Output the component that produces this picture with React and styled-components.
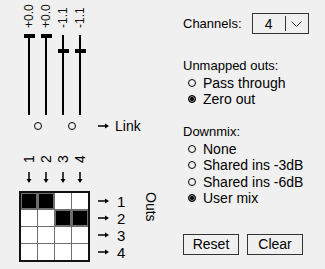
import React from "react";
import styled, { createGlobalStyle } from "styled-components";

const GlobalStyle = createGlobalStyle`
  body {
    margin: 0;
    background: #f0f0f0;
    font-family: "Liberation Sans", Arial, sans-serif;
    font-size: 13px;
    color: #000;
  }
`;

const gains = [0, 0, -1.1, -1.1];
const mix = [
  [1, 1, 0, 0],
  [0, 0, 1, 1],
  [0, 0, 0, 0],
  [0, 0, 0, 0],
];
const TRACK = 80;
const RANGE = 6;

function fmt(db) {
  const s = Math.abs(db).toFixed(1);
  return db < 0 ? "-" + s : "+" + s;
}

function RightArrow() {
  return (
    <svg width="11" height="6" viewBox="0 0 11 6">
      <path d="M0 3H8" stroke="#000" strokeWidth="1.5" />
      <path d="M7 0.5L11 3L7 5.5Z" fill="#000" />
    </svg>
  );
}

function DownArrow() {
  return (
    <svg width="6" height="11" viewBox="0 0 6 11">
      <path d="M3 0V8" stroke="#000" strokeWidth="1.5" />
      <path d="M0.5 7L3 11L5.5 7Z" fill="#000" />
    </svg>
  );
}

function Chevron() {
  return (
    <svg width="11" height="6" viewBox="0 0 11 6">
      <path d="M0.5 0.5L5.5 5.5L10.5 0.5" fill="none" stroke="#333" strokeWidth="1" />
    </svg>
  );
}

export default function App() {
  return (
    <Page>
      <GlobalStyle />
      <LeftPanel>
        <SliderRow>
          {gains.map((g, i) => (
            <SliderCol key={i}>
              <Gain>{fmt(g)}</Gain>
              <Track>
                <Handle style={{ top: (-g / RANGE) * TRACK - 1 }} />
              </Track>
            </SliderCol>
          ))}
        </SliderRow>
        <LinkRow>
          <LinkCell>
            <Circle />
          </LinkCell>
          <LinkCell>
            <Circle />
          </LinkCell>
          <LinkArrow>
            <RightArrow />
          </LinkArrow>
          <LinkLabel>Link</LinkLabel>
        </LinkRow>
        <Header>
          {[1, 2, 3, 4].map((n) => (
            <HeaderCell key={n}>
              <ColNum>{n}</ColNum>
              <DownWrap>
                <DownArrow />
              </DownWrap>
            </HeaderCell>
          ))}
        </Header>
        <MatrixRow>
          <Matrix>
            {mix.map((row, r) =>
              row.map((on, c) => <Cell key={r + "-" + c} $on={!!on} />)
            )}
          </Matrix>
          <OutList>
            {[1, 2, 3, 4].map((n) => (
              <OutItem key={n}>
                <RightArrow />
                <span>{n}</span>
              </OutItem>
            ))}
          </OutList>
          <OutsLabel>Outs</OutsLabel>
        </MatrixRow>
      </LeftPanel>

      <RightPanel>
        <ChannelsRow>
          <span>Channels:</span>
          <Select>
            <SelectValue>4</SelectValue>
            <SelectDivider />
            <SelectButton>
              <Chevron />
            </SelectButton>
          </Select>
        </ChannelsRow>

        <Group $mt="24px">
          <Heading>Unmapped outs:</Heading>
          <Option>
            <Circle />
            Pass through
          </Option>
          <Option>
            <Circle $checked />
            Zero out
          </Option>
        </Group>

        <Group $mt="16.5px">
          <Heading>Downmix:</Heading>
          <Option>
            <Circle />
            None
          </Option>
          <Option>
            <Circle />
            Shared ins -3dB
          </Option>
          <Option>
            <Circle />
            Shared ins -6dB
          </Option>
          <Option>
            <Circle $checked />
            User mix
          </Option>
        </Group>

        <Buttons>
          <Button>Reset</Button>
          <Button>Clear</Button>
        </Buttons>
      </RightPanel>
    </Page>
  );
}

const Page = styled.div`
  display: flex;
  width: 325px;
  height: 269px;
  overflow: hidden;
`;

const LeftPanel = styled.div`
  display: flex;
  flex-direction: column;
  width: 164px;
  padding-left: 19px;
`;

const SliderRow = styled.div`
  display: grid;
  grid-template-columns: repeat(4, 16px);
  column-gap: 1px;
  margin-left: 2px;
`;

const SliderCol = styled.div`
  display: flex;
  flex-direction: column;
  align-items: center;
`;

const Gain = styled.div`
  writing-mode: vertical-rl;
  transform: rotate(180deg);
  height: 25px;
  margin-top: 3px;
  font-size: 12px;
  line-height: 12px;
  text-align: start;
  color: #111;
`;

const Track = styled.div`
  position: relative;
  width: 2px;
  height: ${TRACK}px;
  margin-top: 7px;
  background: #000;
`;

const Handle = styled.div`
  position: absolute;
  left: 50%;
  width: 11px;
  height: 4px;
  margin-left: -5.5px;
  background: #000;
`;

const LinkRow = styled.div`
  display: flex;
  align-items: center;
  height: 9px;
  margin-top: 6px;
  margin-left: 2px;
  gap: 1px;
`;

const LinkCell = styled.div`
  display: flex;
  justify-content: center;
  width: 33px;
`;

const Circle = styled.span`
  display: inline-block;
  flex: none;
  width: 8px;
  height: 8px;
  box-sizing: border-box;
  border: 1.5px solid #000;
  border-radius: 50%;
  background: ${(p) => (p.$checked ? "#000" : "transparent")};
  box-shadow: ${(p) => (p.$checked ? "inset 0 0 0 1px #999" : "none")};
`;

const LinkArrow = styled.div`
  display: flex;
  margin-left: 9px;
`;

const LinkLabel = styled.span`
  margin-left: 5px;
  font-size: 14px;
  line-height: 14px;
`;

const Header = styled.div`
  display: grid;
  grid-template-columns: repeat(4, 16px);
  column-gap: 1px;
  margin-left: 2px;
  margin-top: 24px;
`;

const HeaderCell = styled.div`
  display: flex;
  flex-direction: column;
  align-items: center;
`;

const ColNum = styled.div`
  display: flex;
  align-items: center;
  justify-content: center;
  width: 14px;
  height: 10px;
  font-size: 14px;
  line-height: 14px;
  transform: rotate(-90deg);
`;

const DownWrap = styled.div`
  display: flex;
  margin-top: 8px;
`;

const MatrixRow = styled.div`
  display: flex;
  align-items: flex-start;
  margin-top: 8px;
`;

const Matrix = styled.div`
  display: grid;
  grid-template-columns: repeat(4, 16px);
  grid-auto-rows: 16px;
  gap: 1px;
  background: #6e6e6e;
  border: 2px solid #111;
`;

const Cell = styled.div`
  background: ${(p) => (p.$on ? "#000" : "#fff")};
  box-shadow: ${(p) => (p.$on ? "inset 0 0 0 1px #6e6e6e" : "none")};
`;

const OutList = styled.div`
  display: flex;
  flex-direction: column;
  gap: 1px;
  padding-top: 2px;
  margin-left: 8px;
`;

const OutItem = styled.div`
  display: flex;
  align-items: center;
  gap: 8px;
  height: 16px;
  font-size: 15px;
`;

const OutsLabel = styled.div`
  writing-mode: vertical-rl;
  margin-left: 19px;
  margin-top: 1px;
  font-size: 14px;
  line-height: 14px;
`;

const RightPanel = styled.div`
  display: flex;
  flex-direction: column;
  padding-top: 13px;
`;

const ChannelsRow = styled.div`
  display: flex;
  align-items: center;
  gap: 10px;
`;

const Select = styled.div`
  display: flex;
  width: 57px;
  height: 21px;
  box-sizing: border-box;
  border: 1px solid #333;
  font-size: 14px;
`;

const SelectValue = styled.div`
  display: flex;
  align-items: center;
  justify-content: center;
  width: 32px;
`;

const SelectDivider = styled.div`
  width: 1px;
  margin: 2px 0;
  background: #333;
`;

const SelectButton = styled.div`
  display: flex;
  flex: 1;
  align-items: center;
  justify-content: center;
`;

const Group = styled.div`
  display: flex;
  flex-direction: column;
  margin-top: ${(p) => p.$mt};
  line-height: 16.5px;
`;

const Heading = styled.div`
  height: 16.5px;
`;

const Option = styled.div`
  display: flex;
  align-items: center;
  gap: 7px;
  height: 16.5px;
  padding-left: 5px;
  font-size: 14px;
`;

const Buttons = styled.div`
  display: flex;
  gap: 8px;
  margin-top: 27px;
`;

const Button = styled.button`
  width: 56px;
  height: 21px;
  padding: 0;
  border: 1px solid #333;
  background: #f0f0f0;
  font-family: inherit;
  font-size: 14px;
  color: #000;
`;
